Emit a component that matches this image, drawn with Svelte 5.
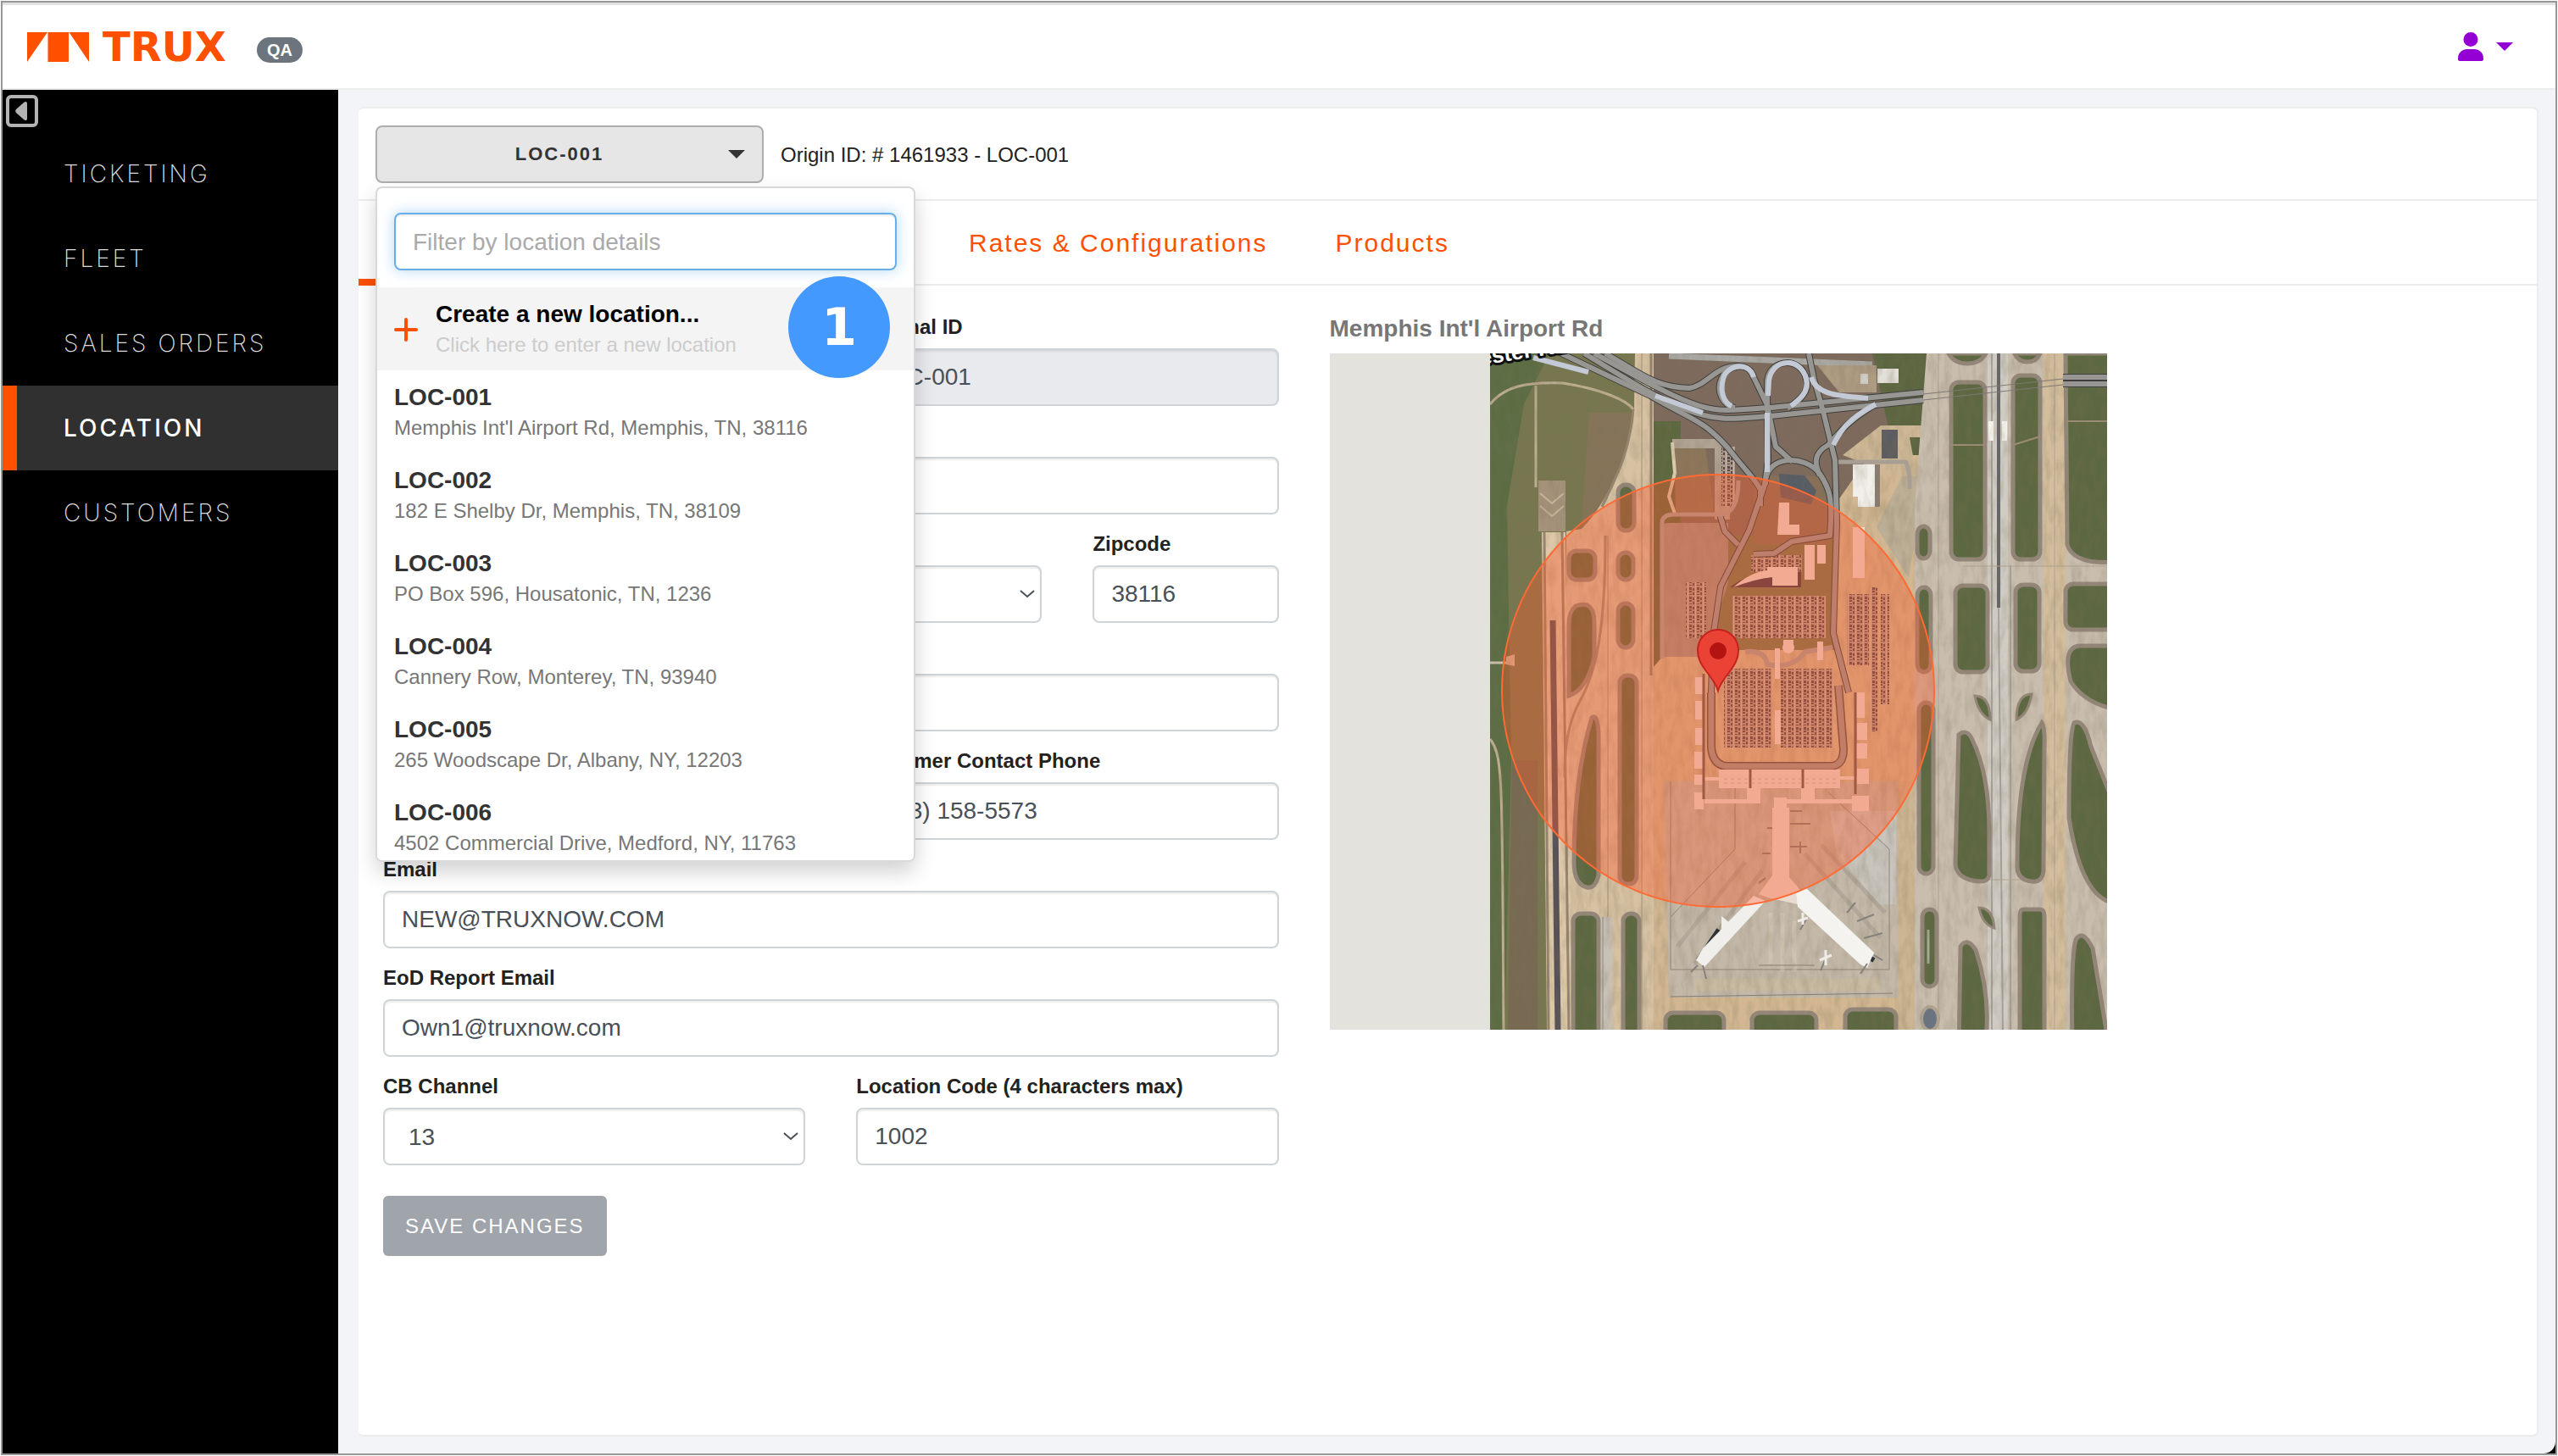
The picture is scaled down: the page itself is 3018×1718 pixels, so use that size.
<script lang="ts">
	type Place = { name: string; address: string };
	type Rect = [number, number, number, number];

	const navItems = ['Ticketing', 'Fleet', 'Sales Orders', 'Location', 'Customers'];

	const locations: Place[] = [
		{ name: 'LOC-001', address: "Memphis Int'l Airport Rd, Memphis, TN, 38116" },
		{ name: 'LOC-002', address: '182 E Shelby Dr, Memphis, TN, 38109' },
		{ name: 'LOC-003', address: 'PO Box 596, Housatonic, TN, 1236' },
		{ name: 'LOC-004', address: 'Cannery Row, Monterey, TN, 93940' },
		{ name: 'LOC-005', address: '265 Woodscape Dr, Albany, NY, 12203' },
		{ name: 'LOC-006', address: '4502 Commercial Drive, Medford, NY, 11763' }
	];

	let activeNav = $state('Location');
	let menuOpen = $state(true);
	let filter = $state('');
	let selected = $state(locations[0]);

	let shown = $derived(
		locations.filter((l) => (l.name + ' ' + l.address).toLowerCase().includes(filter.toLowerCase()))
	);

	function pick(place: Place) {
		selected = place;
		menuOpen = false;
	}

	// grass islands between the taxiways: x, y, width, height
	const islands: Rect[] = [
		[282, 233, 31, 34],
		[340, 155, 19, 54],
		[340, 235, 18, 32],
		[340, 295, 18, 52],
		[342, 380, 20, 246],
		[287, 661, 30, 160],
		[346, 661, 19, 160],
		[693, 204, 15, 38],
		[693, 276, 16, 100],
		[695, 412, 17, 202],
		[699, 656, 17, 91],
		[733, 34, 40, 209],
		[738, 274, 38, 102],
		[806, 26, 32, 217],
		[809, 273, 28, 102],
		[868, 272, 62, 54],
		[396, 778, 69, 40],
		[498, 778, 76, 40],
		[608, 774, 60, 40]
	];

	// parked car rows
	const lots: Rect[] = [
		[475, 286, 110, 50],
		[465, 372, 56, 93],
		[532, 372, 62, 93],
		[610, 284, 26, 84],
		[638, 276, 8, 170],
		[650, 284, 10, 130],
		[420, 270, 24, 66],
		[497, 238, 60, 20],
		[462, 110, 16, 70]
	];

	const roads = [
		'M273 0 L340 32 L378 50 C430 80 440 78 470 112 C500 150 495 140 508 160 L508 180',
		'M300 0 C350 30 380 50 420 66 S480 76 520 74 L700 55',
		'M312 0 C360 26 390 44 425 58 S480 66 520 64 L700 46',
		'M325 0 C370 26 385 40 424 41 C445 38 455 14 482 15',
		'M518 65 L500 28 C494 8 468 14 462 30 C455 46 465 62 478 64',
		'M516 65 L516 32 C520 5 556 4 562 30 C568 46 550 58 540 65',
		'M516 50 L517 126 L513 155 L495 208 L461 275 L452 335 L450 400',
		'M565 0 L571 30 L582 68 L596 126 L598 200 L594 330 L612 400',
		'M517 66 L526 110 L546 128',
		'M514 155 C512 120 560 118 578 142 C590 160 592 170 591 200 L590 215 L545 222 L524 236 L500 237',
		'M644 60 C610 80 600 95 588 108 C570 118 572 130 578 144',
		'M460 190 L466 210 L482 226'
	];

	const ramps = [
		'M500 28 C494 8 468 14 464 30 C460 46 465 58 474 62',
		'M517 50 L518 32 C522 5 556 4 562 30 C566 46 552 56 544 62',
		'M568 28 C574 50 604 50 635 53',
		'M644 60 C610 78 602 92 594 108',
		'M384 50 L440 70',
		'M240 5 L305 22',
		'M516 70 L516 140'
	];
</script>

<svelte:head><title>TRUX</title></svelte:head>

<div class="frame">
	<header class="topbar">
		<a class="brand" href="/" aria-label="Trux home">
			<svg class="mark" viewBox="0 0 73 35" aria-hidden="true">
				<path d="M0 0h24L0 35zM24.500 0h24.500v35h-24.500zM49.500 0H73v35z" />
			</svg>
			<span class="wordmark">TRUX</span>
		</a>
		<span class="env">QA</span>
		<button class="account" aria-label="Account">
			<svg class="person" viewBox="0 0 30 34" aria-hidden="true">
				<circle cx="15" cy="8.500" r="8.500" />
				<path d="M0 32v-1C0 24 5 20 11 20h8c6 0 11 4 11 11v1c0 1-1 2-2 2H2c-1 0-2-1-2-2z" />
			</svg>
			<svg class="person-caret" viewBox="0 0 20 10" aria-hidden="true"><path d="M0 0h20L10 10z" /></svg>
		</button>
	</header>

	<div class="shell">
		<aside class="sidebar">
			<button class="collapse" aria-label="Collapse menu">
				<svg viewBox="0 0 38 38" aria-hidden="true">
					<rect x="2" y="2" width="34" height="34" rx="4" />
					<path d="M25 10v18c0 2-2 3-4 1L12 21c-1-1-1-3 0-4l9-8c2-2 4-1 4 1z" />
				</svg>
			</button>
			<nav>
				{#each navItems as item}
					<a
						href="#{item.toLowerCase().replace(' ', '-')}"
						class:active={item === activeNav}
						onclick={() => (activeNav = item)}>{item}</a
					>
				{/each}
			</nav>
		</aside>

		<main>
			<section class="card">
				<div class="card-head">
					<div class="picker">
						<button class="picker-toggle" onclick={() => (menuOpen = !menuOpen)}>
							<span>{selected.name}</span>
							<svg viewBox="0 0 20 10" aria-hidden="true"><path d="M0 0h20L10 10z" /></svg>
						</button>

						{#if menuOpen}
							<div class="menu">
								<div class="menu-filter">
									<input
										type="text"
										bind:value={filter}
										placeholder="Filter by location details"
										aria-label="Filter by location details"
									/>
								</div>
								<button class="option create">
									<svg viewBox="0 0 28 28" aria-hidden="true"><path d="M14 2v24M2 14h24" /></svg>
									<span class="option-text">
										<strong>Create a new location...</strong>
										<small>Click here to enter a new location</small>
									</span>
								</button>
								{#each shown as place}
									<button class="option" onclick={() => pick(place)}>
										<span class="option-text">
											<strong>{place.name}</strong>
											<small>{place.address}</small>
										</span>
									</button>
								{/each}
								<span class="step">1</span>
							</div>
						{/if}
					</div>
					<span class="origin">Origin ID: # 1461933 - {selected.name}</span>
				</div>

				<div class="tabs">
					<a class="tab wide current" href="#details" aria-label="Details"></a>
					<a class="tab wide" href="#contacts" aria-label="Contacts"></a>
					<a class="tab" href="#rates">Rates &amp; Configurations</a>
					<a class="tab" href="#products">Products</a>
				</div>

				<div class="content">
					<form onsubmit={(e) => e.preventDefault()}>
						<div class="field half">
							<label for="name">Name</label>
							<input id="name" type="text" />
						</div>
						<div class="field half">
							<label for="external">External ID</label>
							<input id="external" type="text" value="LOC-001" disabled />
						</div>
						<div class="field">
							<label for="address">Address</label>
							<input id="address" type="text" />
						</div>
						<div class="field city">
							<label for="city">City</label>
							<input id="city" type="text" />
						</div>
						<div class="field state">
							<label for="state">State</label>
							<div class="select">
								<select id="state"><option></option><option>TN</option><option>NY</option></select>
								<svg viewBox="0 0 18 10" aria-hidden="true"><path d="M1 1l8 7 8-7" /></svg>
							</div>
						</div>
						<div class="field zip">
							<label for="zip">Zipcode</label>
							<input id="zip" type="text" value="38116" />
						</div>
						<div class="field">
							<label for="notes">Notes</label>
							<input id="notes" type="text" />
						</div>
						<div class="field half">
							<label for="contact">Contact</label>
							<input id="contact" type="text" />
						</div>
						<div class="field half">
							<label for="phone">Customer Contact Phone</label>
							<input id="phone" type="tel" value="(513) 158-5573" />
						</div>
						<div class="field">
							<label for="email">Email</label>
							<input id="email" type="text" value="NEW@TRUXNOW.COM" />
						</div>
						<div class="field">
							<label for="eod">EoD Report Email</label>
							<input id="eod" type="text" value="Own1@truxnow.com" />
						</div>
						<div class="field half">
							<label for="cb">CB Channel</label>
							<div class="select">
								<select id="cb"><option>13</option><option>14</option></select>
								<svg viewBox="0 0 18 10" aria-hidden="true"><path d="M1 1l8 7 8-7" /></svg>
							</div>
						</div>
						<div class="field half">
							<label for="code">Location Code (4 characters max)</label>
							<input id="code" type="text" maxlength="4" value="1002" />
						</div>
						<button type="submit" class="save">SAVE CHANGES</button>
					</form>

					<div class="map-col">
						<h2>Memphis Int'l Airport Rd</h2>
						<svg class="map" viewBox="0 0 917 798" role="img" aria-label="Satellite map">
							<defs>
								<clipPath id="imagery"><rect x="189" y="0" width="728" height="798" /></clipPath>
								<pattern id="cars" width="9" height="11" patternUnits="userSpaceOnUse">
									<rect width="9" height="11" fill="#ab978a" />
									<path d="M1 1h3v3H1zM1 5h3v2H1zM1 9h3v1H1zM5 2h2v3H5zM5 7h2v3H5z" fill="#554a4b" />
									<path d="M8 0h1v11H8z" fill="#cbb9a9" />
								</pattern>
								<filter id="grain" x="0" y="0" width="100%" height="100%">
									<feTurbulence type="fractalNoise" baseFrequency="0.12 0.04" numOctaves="5" seed="4" />
									<feColorMatrix values="0 0 0 0 0.2  0 0 0 0 0.17  0 0 0 0 0.1  1.6 0 0 0 -0.6" />
								</filter>
							</defs>
							<rect width="917" height="798" fill="#e3e2dd" />

							<g clip-path="url(#imagery)">
								<rect x="189" width="728" height="798" fill="#77774f" />
								<!-- field west of the runway -->
								<path d="M189 0h70l-30 60-20 120 5 300-8 318h-17z" fill="#5c6d44" />
								<path d="M306 70h55l-5 70-40 75h-20z" fill="#857458" />
								<path d="M215 480h30v318h-35z" fill="#786a52" />
								<path d="M189 60C205 40 230 33 275 35C320 42 350 55 358 66M243 38v120M189 455c16 20 14 50 16 343" fill="none" stroke="#bcac90" stroke-width="3" />
								<path d="M189 365h24" stroke="#d0c4b0" stroke-width="3" />
								<path d="M208 358l10-3v14l-10-2z" fill="#ddc4ac" />
								<path d="M246 150h32v60h-32z" fill="#a5927a" />
								<path d="M248 165l14 12 14-12M248 180l14 12 14-12" fill="none" stroke="#c6b79c" stroke-width="2" />

								<!-- west runway and taxiways -->
								<path d="M360 0h22v798H279V210l18-3c30-30 58-90 62-140z" fill="#d6c1a2" />
								<path d="M250 211h28l8 587h-30z" fill="#dcc7a8" />
								<path d="M263 315l6 483" stroke="#565157" stroke-width="7" />
								<path d="M358 66c-4 50-20 80-37 115M379 0v380M274 211l8 587M253 211l5 587" fill="none" stroke="#97846f" stroke-width="3" />
								<path d="M325 215c0 110-10 160-30 195-16 30-18 60-18 90" fill="none" stroke="#a38d74" stroke-width="3" />
								<path d="M368 0v798M328 215v583" stroke="#bba88b" stroke-width="2" />
								<path d="M313 665h20v133h-20z" fill="#c8c1b5" />
								<path d="M322 665v133" stroke="#aba396" stroke-width="2" />

								<!-- terminal area ground -->
								<path d="M382 0h322v215H382z" fill="#7d6a5d" />
								<path d="M382 80h32v280h-15v20h-17z" fill="#5d683f" />
								<path d="M640 0h66v120h-40z" fill="#5b6640" />
								<path d="M399 350l-17 20v428h320V120h-65l-42 60v170z" fill="#d2b792" />
								<path d="M406 105h36l10 70v12h-44z" fill="#8d765a" />
								<path d="M404 101h54l14 30v65h-18V112h-50z" fill="#b1a494" />
								<path d="M404 105l3 36-7 28 7 20" fill="none" stroke="#dacaae" stroke-width="4" />
								<path d="M392 205q0-5 8-5h70v70l-22 70-4 18h-52z" fill="#a39386" />
								<path d="M500 145h88v80h-88z" fill="#887057" />
								<path d="M530 142l30 2 14 18-6 16-36-8z" fill="#565d64" />
								<path d="M394 505h276v255H400z" fill="#c4b9a9" />
								<path d="M590 540h78v110h-20l-50-60z" fill="#c9c5bd" />
								<path d="M670 505h24v293h-24z" fill="#ccb592" />
								<path d="M402 505v222h258V585l-72-67M478 505v80l-76 80" fill="none" stroke="#8d847a" stroke-width="1" />
								<g fill="none" stroke="#a79e92" stroke-width="5" opacity="0.6">
									<path d="M490 600L410 700M510 610L430 720M560 590L650 690M580 580L655 660" />
									<path d="M520 660v60M534 660v70M548 670v60" stroke="#d6cab6" />
								</g>
								<path d="M430 745h220" stroke="#cdbd9f" stroke-width="14" opacity="0.6" />
								<path d="M402 759l262-4" stroke="#857e74" stroke-width="1" />

								<!-- top right of the interchange -->
								<path d="M400 3l240 10" stroke="#aaa9a5" stroke-width="7" />
								<path d="M575 14h70v32h-44z" fill="#ad9b82" />
								<rect x="646" y="18" width="25" height="17" fill="#e3dfd9" />
								<rect x="626" y="24" width="9" height="12" fill="#d0cbc4" />
								<path d="M605 120l45-35h56v14h-22l10 55z" fill="#cdb795" />
								<rect x="651" y="90" width="19" height="34" fill="#5d5d61" />
								<path d="M617 131h26v50h-20v-12h-6z" fill="#f1efe9" />
								<path d="M643 131h6v50h-6z" fill="#8a7d71" />
								<path d="M645 205l30-60h18v60l-10 60z" fill="#bdae96" />

								<!-- east runways -->
								<path d="M704 0h213v798H690V180z" fill="#c9beae" />
								<path d="M776 0h24v798h-24z" fill="#d0ccc4" />
								<path d="M842 0h26v798h-26z" fill="#d3bd9c" />
								<path d="M789 0v300" stroke="#66666a" stroke-width="4" />
								<path d="M789 300l5 498M781 0v798M803 250v548" stroke="#a7a29b" stroke-width="2" />
								<path d="M718 0v798M855 0v798M747 251h170M760 621h80" stroke="#b0a38f" stroke-width="1" />
								<rect x="777" y="80" width="6" height="23" fill="#f4f2ed" />
								<rect x="793" y="80" width="6" height="23" fill="#f4f2ed" />

								<g fill="#5c6841" stroke="#94877a" stroke-width="5">
									{#each islands as [x, y, w, h]}
										<rect {x} {y} width={w} height={h} rx="9" />
									{/each}
									<path d="M290 298q22-8 22 20v40q-8 38-30 46V320q0-16 8-22z" />
									<path d="M309 430q6-6 8 16v170q-4 16-14 14-15-4-15-30 0-100 21-170z" />
									<path d="M742 450q10-8 16 6 20 40 20 110v50q-2 8-12 7-26-2-28-20z" />
									<path d="M744 700q8-12 18 4 20 60 10 120h-30z" />
									<path d="M840 436q4 6 3 30l-1 145q-2 14-14 12-18-2-17-20 0-120 29-167z" />
									<path d="M818 656h20q5 0 5 8v140h-29V664q0-8 4-8z" />
									<path d="M868 0h60v246q-50 4-58-20z" />
									<path d="M930 345v76q-40-8-56-34-10-40 10-42z" />
									<path d="M878 436q12-6 20 28l24 60v124q-36-10-50-100 0-100 6-112z" />
									<path d="M880 692q8-14 20 10l20 120h-44q-2-110 4-130z" />
									<path d="M730 0h44q-6 12-22 12T730 0zM808 0h30q-4 10-15 10T808 0z" />
									<path d="M761 404q18 0 18 28-14-6-18-28zM828 402q-18 0-18 30 14-6 18-30zM766 654q16 0 18 24-14-4-18-24z" stroke-width="3" />
								</g>
								<ellipse cx="708" cy="785" rx="10" ry="14" fill="#6a7383" stroke="#afa38f" stroke-width="4" />
								<path d="M706 680v40" stroke="#a4ab96" stroke-width="3" />
								<path d="M733 108h40M806 108l32-10M868 80h49" stroke="#9c8c76" stroke-width="2" />

								<rect x="189" width="728" height="798" filter="url(#grain)" opacity="0.32" />

								{#each lots as [x, y, w, h]}
									<rect {x} {y} width={w} height={h} fill="url(#cars)" />
								{/each}

								<!-- access roads -->
								<g fill="none" stroke-linejoin="round">
									{#each roads as d}
										<path {d} stroke="#3f3f3d" stroke-width="8" />
									{/each}
									{#each roads as d}
										<path {d} stroke="#979692" stroke-width="6" />
									{/each}
									{#each ramps as d}
										<path {d} stroke="#c3cad6" stroke-width="6" />
									{/each}
									<path d="M865 28h52M865 36h52" stroke="#3f3f3d" stroke-width="8" />
									<path d="M865 28h52M865 36h52" stroke="#979692" stroke-width="6" />
									<path d="M700 48l165-18M700 55l165-18" stroke="#7c7975" stroke-width="1" />
									<path d="M392 360V200q0-10 14-10h56q20-2 20-40" stroke="#a99e93" stroke-width="5" />
									<path d="M600 128h80l4 16v16" stroke="#a99e93" stroke-width="5" />
									<path d="M450 400v65q2 22 20 22h120q16 0 16-20l-6-75" stroke="#5d504c" stroke-width="10" />
									<path d="M450 400v65q2 22 20 22h120q16 0 16-20l-6-75" stroke="#9f928a" stroke-width="7" />
									<path d="M490 352q24-2 26 15 30 6 45-15l32-5" stroke="#a99e93" stroke-width="6" />
								</g>

								<!-- terminal buildings -->
								<path d="M472 276q30-24 84-18v18z" fill="#46394d" />
								<g fill="#eadbd0">
									<path d="M476 276q20-18 40-20v-4h36v22h-30v-10q-20 2-46 12zM560 226h12v41h-12zM530 176h12v26h12v12h-26zM575 226h10v22h-10zM617 205h14v60h-14zM535 338h12v10h-12zM575 340h7v22h-7z" />
									<path d="M431 382h10v20h-10zM431 410h8v22h-8zM431 442h10v20h-10zM430 470h10v20h-10zM430 497h12v12h-12zM430 518h11v20h-11zM620 400h11v30h-11zM622 436h12v20h-12zM620 460h14v18h-14zM622 490h14v18h-14zM616 522h20v18h-20z" />
									<path d="M459 491h143v22H459zM441 500h20v4h-20zM600 499h22v4h-22z" />
									<path d="M442 526h50v-13h16v18h-66zM538 531h80v-5h-46v-13h-16v13h-18z" />
									<path d="M524 524h15v12h3v82l12 14-2 18-36-8-10-4 16-22V536h2z" />
									<rect x="525" y="348" width="6" height="36" />
									<rect x="525" y="421" width="7" height="40" />
								</g>
								<circle cx="541" cy="347" r="7" fill="#eadbd0" />
								<path d="M441 378v148M620 400v120M496 491v22M558 491v22" fill="none" stroke="#6c5953" stroke-width="3" />
								<path d="M465 502h132M465 507h132" stroke="#c9b1a0" stroke-width="1" stroke-dasharray="4 4" />
								<path d="M543 555h24M516 560h6M543 540h14M543 582h20M510 590h10M555 576v14M506 625l8-6" stroke="#8b7c72" stroke-width="2" />
								<path d="M459 680l-24 36M556 634l18 20 32 42 36 20" fill="none" stroke="#2e3136" stroke-width="6" />
								<path d="M500 640l14 6-72 78-10-8 8-14z" fill="#f1efec" />
								<path d="M462 664l10 8-10 10z" fill="#f1efec" />
								<path d="M550 635l12-4 80 76-8 18-8-4-74-68z" fill="#f4f3f0" />
								<path d="M434 722l-8 8M440 722l4 16M634 720l-8 12M642 710l10 6M585 714l-6 14M555 680l8-14M622 670l20-8M630 690l22-6M610 660l10-12" fill="none" stroke="#85817b" stroke-width="2" />
								<path d="M506 722h66" stroke="#877f75" stroke-width="1" />
								<path d="M585 704v18M578 716l14-6M558 660v14M552 670l12-4" stroke="#efece7" stroke-width="3" />

								<circle cx="458" cy="398" r="255" fill="#ff5a28" fill-opacity="0.37" stroke="#ff6a35" stroke-width="2" />

								<text class="road-name" x="178" y="14" transform="rotate(-9 178 14)">ester Rd</text>
							</g>

							<path d="M458 326c-14 0-24 11-24 25 0 10 5 17 10 24 8 10 12 16 14 23 2-7 6-13 14-23 5-7 10-14 10-24 0-14-10-25-24-25z" fill="#ea4335" stroke="#c5221f" stroke-width="2" />
							<circle cx="458" cy="351" r="10" fill="#b31412" />
						</svg>
					</div>
				</div>
			</section>
		</main>
	</div>
</div>

<style>
	:global(body) {
		margin: 0;
		background: #fff;
	}

	.frame {
		--orange: #ff5000;
		--line: #ececec;
		display: flex;
		flex-direction: column;
		box-sizing: border-box;
		min-height: calc(100vh - 2px);
		margin: 1px;
		border: 2px solid #959895;
		font-family: 'Liberation Sans', Arial, sans-serif;
		font-size: 24px;
		color: #222;
	}

	button,
	input,
	select {
		font: inherit;
		box-sizing: border-box;
	}

	.topbar {
		display: flex;
		align-items: center;
		box-sizing: border-box;
		height: 103px;
		padding: 0 50px 0 29px;
		border-top: 3px solid #e2e2e2;
		border-bottom: 2px solid var(--line);
	}

	.brand {
		display: flex;
		align-items: center;
		gap: 16px;
		color: var(--orange);
		text-decoration: none;
	}

	.mark {
		width: 73px;
		height: 35px;
		fill: currentColor;
	}

	.wordmark {
		min-width: 162px;
		font-family: 'DejaVu Sans', sans-serif;
		font-size: 48px;
		line-height: 48px;
		font-weight: 700;
	}

	.env {
		margin: 8px 0 0 20px;
		padding: 0 12px;
		border-radius: 15px;
		background: #6c757d;
		color: #fff;
		font-size: 20px;
		line-height: 30px;
		font-weight: 700;
	}

	.account {
		display: flex;
		align-items: center;
		gap: 15px;
		margin-left: auto;
		padding: 0;
		border: 0;
		background: none;
		fill: #9400d3;
	}

	.person {
		width: 30px;
		height: 34px;
	}

	.person-caret {
		width: 20px;
		height: 10px;
	}

	.shell {
		flex: 1;
		display: flex;
		background: #000;
	}

	.sidebar {
		width: 396px;
		flex: none;
		color: #dcdcdc;
	}

	.collapse {
		display: block;
		margin: 6px 0 5px 4px;
		padding: 0;
		border: 0;
		background: none;
	}

	.collapse svg {
		display: block;
		width: 38px;
		height: 38px;
		fill: #b3b3b3;
	}

	.collapse rect {
		fill: none;
		stroke: #b3b3b3;
		stroke-width: 4;
	}

	.sidebar nav a {
		display: block;
		padding-left: 55px;
		border-left: 17px solid transparent;
		font-family: Inter, sans-serif;
		font-size: 28px;
		line-height: 100px;
		font-weight: 200;
		letter-spacing: 3px;
		color: inherit;
		text-transform: uppercase;
		text-decoration: none;
	}

	.sidebar nav a.active {
		border-left-color: var(--orange);
		background: #303030;
		color: #fff;
		font-weight: 500;
	}

	main {
		flex: 1;
		display: flex;
		min-width: 0;
		padding: 20px 22px 20px 24px;
		background: #f3f4f8;
		border-bottom-right-radius: 14px;
	}

	.card {
		flex: 1;
		min-width: 0;
		border: solid var(--line);
		border-width: 2px 0;
		border-radius: 6px;
		background: #fff;
		box-shadow: 2px 0 0 var(--line);
	}

	.card-head {
		display: flex;
		align-items: center;
		box-sizing: border-box;
		height: 109px;
		padding-left: 20px;
		border-bottom: 2px solid var(--line);
	}

	.picker {
		position: relative;
	}

	.picker-toggle {
		display: flex;
		align-items: center;
		width: 458px;
		height: 68px;
		padding: 0 20px 0 16px;
		border: 2px solid #adadad;
		border-radius: 8px;
		background: #e6e6e6;
		color: #333;
		font-size: 22px;
		font-weight: 700;
		letter-spacing: 2px;
	}

	.picker-toggle span {
		flex: 1;
	}

	.picker-toggle svg {
		width: 20px;
		height: 10px;
		fill: #333;
	}

	.origin {
		margin-left: 20px;
		padding-top: 2px;
	}

	.menu {
		position: absolute;
		z-index: 10;
		top: 72px;
		left: 0;
		box-sizing: border-box;
		width: 637px;
		max-height: 797px;
		padding-top: 29px;
		overflow: hidden;
		border: 2px solid #d9d9d9;
		border-radius: 8px;
		background: #fff;
		box-shadow: 0 12px 24px rgba(0, 0, 0, 0.18);
	}

	.menu-filter {
		padding: 0 20px 20px;
	}

	.menu-filter input {
		display: block;
		width: 100%;
		height: 68px;
		padding: 2px 20px 0;
		border: 2px solid #66afe9;
		border-radius: 8px;
		outline: none;
		font-size: 28px;
		box-shadow: inset 0 2px 2px rgba(0, 0, 0, 0.08), 0 0 16px rgba(102, 175, 233, 0.5);
	}

	.menu-filter input::placeholder {
		color: #aaa;
	}

	.option {
		display: flex;
		align-items: center;
		gap: 21px;
		width: 100%;
		height: 98px;
		padding: 2px 20px 0;
		border: 0;
		background: #fff;
		text-align: left;
	}

	.option strong,
	.option small {
		display: block;
		line-height: 36px;
	}

	.option strong {
		color: #333;
		font-size: 28px;
	}

	.option small {
		color: #777;
		font-size: 24px;
	}

	.option.create {
		background: #f4f4f4;
	}

	.create strong {
		color: #000;
	}

	.create small {
		color: #ccc;
	}

	.create svg {
		width: 28px;
		height: 28px;
		stroke: var(--orange);
		stroke-width: 4;
		stroke-linecap: round;
	}

	/* walkthrough marker */
	.step {
		position: absolute;
		top: 104px;
		right: 28px;
		width: 120px;
		border-radius: 50%;
		background: #49f;
		color: #fff;
		font-family: 'DejaVu Sans', sans-serif;
		font-size: 60px;
		font-weight: 700;
		line-height: 120px;
		text-align: center;
	}

	.tabs {
		display: flex;
		border-bottom: 2px solid var(--line);
	}

	.tab {
		box-sizing: border-box;
		height: 98px;
		padding: 0 40px;
		color: var(--orange);
		font-size: 30px;
		line-height: 100px;
		letter-spacing: 2px;
		text-decoration: none;
	}

	.tab.wide {
		width: 340px;
	}

	.tab.current {
		height: 100px;
		margin-bottom: -2px;
		border-bottom: 8px solid var(--orange);
	}

	.content {
		display: grid;
		grid-template-columns: 43fr 57fr;
		gap: 60px;
		align-items: start;
		padding: 34px 24px 34px 29px;
	}

	form {
		display: grid;
		grid-template-columns: repeat(12, 1fr);
		gap: 20px 60px;
	}

	.field {
		grid-column: span 12;
		min-width: 0;
	}

	.field.half {
		grid-column: span 6;
	}

	.field.city {
		grid-column: span 5;
	}

	.field.state {
		grid-column: span 4;
	}

	.field.zip {
		grid-column: span 3;
	}

	label {
		display: block;
		margin-bottom: 10px;
		line-height: 30px;
		font-weight: 700;
	}

	.field input,
	.field select {
		display: block;
		width: 100%;
		height: 68px;
		padding: 0 20px;
		border: 2px solid #ced4da;
		border-radius: 8px;
		background: #fff;
		color: #495057;
		font-size: 28px;
		box-shadow: inset 0 2px 2px rgba(0, 0, 0, 0.08);
	}

	.field input:disabled {
		background: #e9eaee;
	}

	.select {
		display: grid;
		align-items: center;
	}

	.select select,
	.select svg {
		grid-area: 1 / 1;
	}

	.field .select select {
		appearance: none;
		padding: 0 28px;
	}

	.select svg {
		justify-self: end;
		width: 18px;
		height: 10px;
		margin-right: 8px;
		fill: none;
		stroke: #495057;
		stroke-width: 2;
		pointer-events: none;
	}

	.save {
		grid-column: span 12;
		justify-self: start;
		height: 71px;
		margin-top: 16px;
		padding: 0 26px;
		border: 0;
		border-radius: 6px;
		background: #a0a4ab;
		color: #fff;
		letter-spacing: 2px;
	}

	h2 {
		margin: 0;
		color: #777;
		font-size: 28px;
		line-height: 34px;
	}

	.map {
		display: block;
		width: 917px;
		max-width: 100%;
		margin-top: 12px;
	}

	.road-name {
		fill: #fff;
		stroke: #111;
		stroke-width: 6;
		stroke-linejoin: round;
		paint-order: stroke;
		font-size: 26px;
		font-weight: 700;
	}
</style>
